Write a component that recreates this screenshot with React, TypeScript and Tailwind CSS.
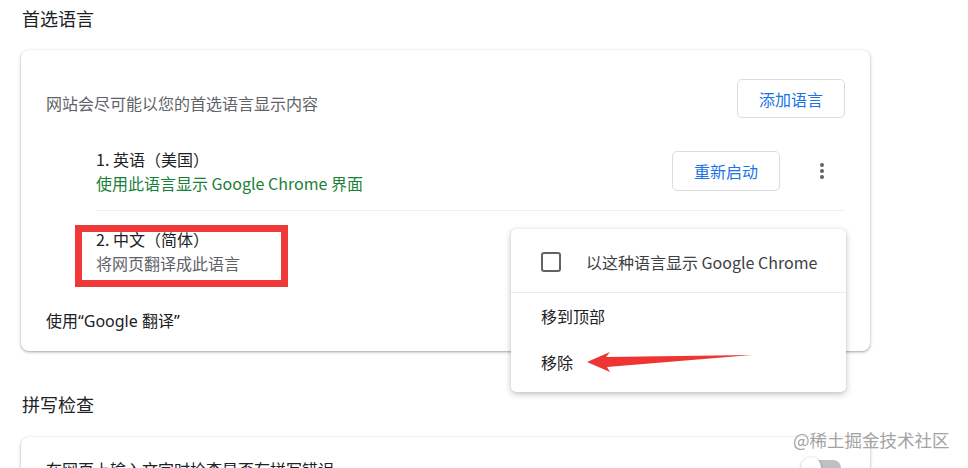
import React from "react";

const cardShadow =
  "shadow-[0_1px_2px_0_rgba(60,64,67,0.3),0_1px_3px_1px_rgba(60,64,67,0.15)]";

function MoreVert() {
  return (
    <svg width="24" height="24" viewBox="0 0 24 24" fill="#5f6368">
      <circle cx="12" cy="6" r="2" />
      <circle cx="12" cy="12" r="2" />
      <circle cx="12" cy="18" r="2" />
    </svg>
  );
}

function OutlineButton({ children, h }: { children: React.ReactNode; h: string }) {
  return (
    <button
      type="button"
      className={`${h} w-[108px] shrink-0 rounded-[5px] border border-[#dadce0] bg-white text-[16px] text-[#1a73e8]`}
    >
      {children}
    </button>
  );
}

function LanguageMenu() {
  return (
    <div className="absolute left-[490px] top-[179px] z-10 w-[335px] rounded-[5px] bg-white pb-[7px] shadow-[0_2px_6px_rgba(0,0,0,0.25),0_0_1px_rgba(0,0,0,0.15)]">
      <div className="flex h-[64px] items-center border-b border-[#e8eaed] pl-[30px] pt-[2px]">
        <span className="h-[20px] w-[20px] rounded-[3px] border-2 border-[#5f6368]" />
        <span className="ml-[25px] text-[16px] text-[#3c4043]">以这种语言显示 Google Chrome</span>
      </div>
      <div className="flex h-[46px] items-center pl-[30px] text-[16px] text-[#202124]">移到顶部</div>
      <div className="flex h-[46px] items-center pl-[30px] text-[16px] text-[#202124]">移除</div>
    </div>
  );
}

export default function App() {
  return (
    <div className="relative h-[468px] w-[968px] overflow-hidden bg-white font-['Noto_Sans_CJK_SC',sans-serif]">
      <div className="w-[870px] pl-[21px] pt-[5px]">
        <h2 className="pl-px text-[18px] leading-[27px] text-[#202124]">首选语言</h2>

        <div className={`relative mt-[18px] rounded-[8px] bg-white px-[25px] pt-[29px] ${cardShadow}`}>
          <div className="flex items-start justify-between">
            <p className="mt-[12px] text-[16px] leading-[24px] text-[#5f6368]">
              网站会尽可能以您的首选语言显示内容
            </p>
            <OutlineButton h="h-[39px]">添加语言</OutlineButton>
          </div>

          <div className="ml-[50px] mt-[13px]">
            <div className="flex h-[80px] items-center border-b border-[#eceef1]">
              <div className="flex-1 text-[16px] leading-[24px]">
                <div className="text-[#202124]">1. 英语（美国）</div>
                <div className="text-[#188038]">使用此语言显示 Google Chrome 界面</div>
              </div>
              <OutlineButton h="h-[40px]">重新启动</OutlineButton>
              <div className="ml-[19px] flex w-[46px] justify-center">
                <MoreVert />
              </div>
            </div>

            <div className="relative flex h-[80px] items-center">
              <div className="text-[16px] leading-[24px]">
                <div className="text-[#202124]">2. 中文（简体）</div>
                <div className="text-[#5f6368]">将网页翻译成此语言</div>
              </div>
              {/* annotation box */}
              <div className="absolute left-[-21px] top-[14px] h-[62px] w-[213px] border-[7px] border-[#ef3838]" />
            </div>
          </div>

          <div className="flex h-[60px] items-center font-['Noto_Sans','Noto_Sans_CJK_SC',sans-serif] text-[16px] text-[#202124]">
            使用“Google 翻译”
          </div>

          <LanguageMenu />
        </div>

        <h2 className="mt-[40px] pl-px text-[18px] leading-[27px] text-[#202124]">拼写检查</h2>

        <div className={`mt-[19px] h-[100px] rounded-[8px] bg-white px-[25px] pt-[20px] ${cardShadow}`}>
          <div className="flex h-[24px] items-center justify-between">
            <span className="text-[16px] text-[#202124]">在网页上输入文字时检查是否有拼写错误</span>
            <div className="relative mr-[4px] mt-[-4px] h-[20px] w-[40px]">
              <div className="absolute left-[4px] top-[3px] h-[16px] w-[36px] rounded-full bg-[#bdc1c6]" />
              <div className="absolute left-0 top-0 h-[20px] w-[20px] rounded-full bg-white shadow-[0_1px_3px_rgba(0,0,0,0.4)]" />
            </div>
          </div>
        </div>
      </div>

      {/* annotation arrow */}
      <svg className="absolute left-[585px] top-[350px] z-20" width="170" height="26" viewBox="0 0 170 26">
        <polygon points="2,12 25,2 21,7 167,5 22,17 25,22" fill="#ef3434" />
      </svg>

      <div className="absolute left-[793px] top-[429px] z-20 text-[17.5px] leading-[22px] text-[#a3a3a3]">
        @稀土掘金技术社区
      </div>
    </div>
  );
}
